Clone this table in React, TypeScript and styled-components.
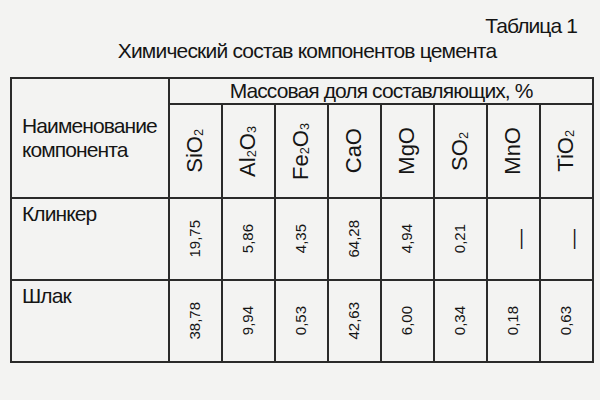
import React from "react";
import styled, { createGlobalStyle } from "styled-components";

const GlobalStyle = createGlobalStyle`
  body {
    margin: 0;
    background: #f3f3f2;
    color: #151515;
    font-family: "Liberation Sans", Arial, sans-serif;
  }
`;

const Page = styled.div`
  width: 600px;
  height: 400px;
  box-sizing: border-box;
  padding: 14px 0 0 10px;
`;

const Caption = styled.div`
  text-align: right;
  padding-right: 23px;
  font-size: 21px;
  line-height: 24px;
  letter-spacing: -0.9px;
`;

const Title = styled.div`
  text-align: center;
  padding-left: 4px;
  margin: 1px 0 14px;
  font-size: 21px;
  line-height: 24px;
  letter-spacing: -0.8px;
`;

const Table = styled.table`
  border-collapse: collapse;
  table-layout: fixed;
  width: 584px;
`;

const Cell = styled.td<{ $h?: number }>`
  border: 2px solid #2a2a2a;
  padding: 0;
  height: ${({ $h }) => ($h ? `${$h}px` : "auto")};
  vertical-align: middle;
  text-align: center;
`;

const NameCell = styled(Cell)`
  text-align: left;
  padding-left: 10px;
  font-size: 21px;
  line-height: 24px;
  letter-spacing: -0.9px;
`;

const RowName = styled(NameCell)`
  vertical-align: top;
  padding-top: 3px;
`;

const GroupHead = styled(Cell)`
  font-size: 21px;
  line-height: 24px;
  letter-spacing: -0.9px;
`;

const Centre = styled.div<{ $shift?: number }>`
  display: flex;
  justify-content: center;
  padding-left: ${({ $shift }) => $shift ?? 0}px;
`;

const VText = styled.span<{ $size: number }>`
  display: inline-block;
  writing-mode: vertical-rl;
  transform: rotate(180deg);
  font-size: ${({ $size }) => $size}px;
  line-height: 1.1;
`;

const Sub = styled.sub`
  font-size: 0.58em;
  vertical-align: -0.3em;
  line-height: 0;
`;

const formula = (f: string) =>
  f.split(/(\d)/).map((part, i) =>
    /\d/.test(part) ? <Sub key={i}>{part}</Sub> : <React.Fragment key={i}>{part}</React.Fragment>
  );

const oxides = ["SiO2", "Al2O3", "Fe2O3", "CaO", "MgO", "SO2", "MnO", "TiO2"];

const rows = [
  { name: "Клинкер", values: ["19,75", "5,86", "4,35", "64,28", "4,94", "0,21", "—", "—"] },
  { name: "Шлак", values: ["38,78", "9,94", "0,53", "42,63", "6,00", "0,34", "0,18", "0,63"] },
];

export default function App() {
  return (
    <Page>
      <GlobalStyle />
      <Caption>Таблица 1</Caption>
      <Title>Химический состав компонентов цемента</Title>
      <Table>
        <colgroup>
          <col style={{ width: 158 }} />
          {oxides.map((o) => (
            <col key={o} style={{ width: 53 }} />
          ))}
        </colgroup>
        <tbody>
          <tr>
            <NameCell rowSpan={2}>
              Наименование
              <br />
              компонента
            </NameCell>
            <GroupHead colSpan={8} $h={24}>
              Массовая доля составляющих, %
            </GroupHead>
          </tr>
          <tr>
            {oxides.map((o) => (
              <Cell key={o} $h={92}>
                <Centre>
                  <VText $size={22}>{formula(o)}</VText>
                </Centre>
              </Cell>
            ))}
          </tr>
          {rows.map((r) => (
            <tr key={r.name}>
              <RowName $h={77}>{r.name}</RowName>
              {r.values.map((v, i) => (
                <Cell key={i}>
                  <Centre $shift={v === "—" ? 12 : 0}>
                    <VText $size={v === "—" ? 20 : 15}>{v}</VText>
                  </Centre>
                </Cell>
              ))}
            </tr>
          ))}
        </tbody>
      </Table>
    </Page>
  );
}
